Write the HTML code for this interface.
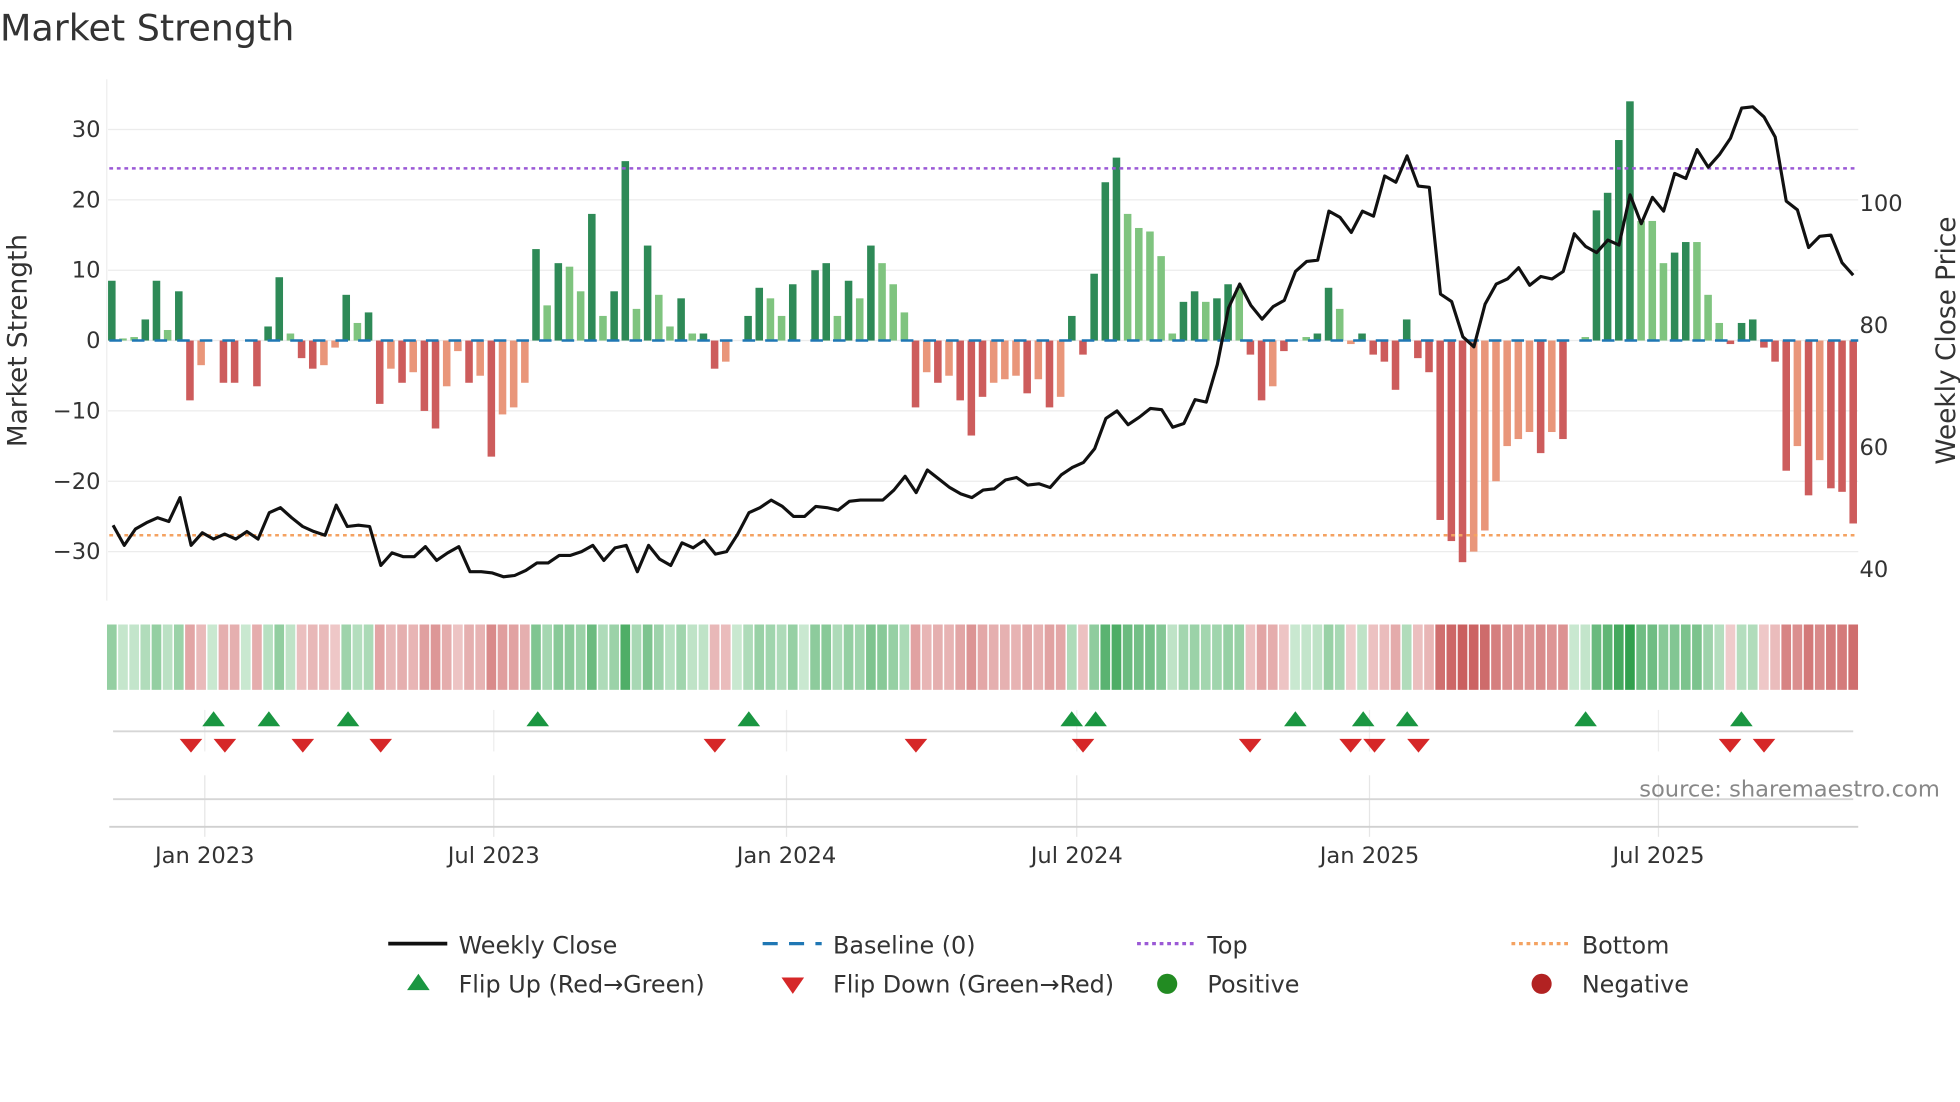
<!DOCTYPE html>
<html><head><meta charset="utf-8">
<style>
html,body{margin:0;padding:0;background:#fff;width:1960px;height:1102px;overflow:hidden}
svg{display:block}
text{font-family:"DejaVu Sans","Liberation Sans",sans-serif}
</style></head>
<body>
<svg id="s" width="1960" height="1102" viewBox="0 0 1560 877" xmlns="http://www.w3.org/2000/svg">
<rect width="1560" height="877" fill="#fff"/>
<text x="0" y="32" font-size="29" fill="#333">Market Strength</text>
<g id="grid"></g>
<g id="bars"></g>
<g id="strip"></g>
<g id="marks"></g>
<g id="lines"></g>
<g font-size="18" fill="#333">
<text x="80" y="109" text-anchor="end">30</text>
<text x="80" y="165" text-anchor="end">20</text>
<text x="80" y="221" text-anchor="end">10</text>
<text x="80" y="277" text-anchor="end">0</text>
<text x="80" y="333" text-anchor="end">−10</text>
<text x="80" y="389" text-anchor="end">−20</text>
<text x="80" y="445" text-anchor="end">−30</text>
<text x="1480" y="168">100</text>
<text x="1480" y="265">80</text>
<text x="1480" y="362">60</text>
<text x="1480" y="459">40</text>
<text transform="translate(21,271) rotate(-90)" text-anchor="middle" font-size="21">Market Strength</text>
<text transform="translate(1556,271) rotate(-90)" text-anchor="middle" font-size="21">Weekly Close Price</text>
<text x="163" y="687" text-anchor="middle">Jan 2023</text>
<text x="393" y="687" text-anchor="middle">Jul 2023</text>
<text x="626" y="687" text-anchor="middle">Jan 2024</text>
<text x="857" y="687" text-anchor="middle">Jul 2024</text>
<text x="1090" y="687" text-anchor="middle">Jan 2025</text>
<text x="1320" y="687" text-anchor="middle">Jul 2025</text>
<text x="1544" y="634" text-anchor="end" fill="#888">source: sharemaestro.com</text>
</g>
<g font-size="19" fill="#333">
<line x1="309" y1="751" x2="356" y2="751" stroke="#111" stroke-width="3"/>
<text x="365" y="759">Weekly Close</text>
<line x1="607" y1="751" x2="654" y2="751" stroke="#1f77b4" stroke-width="2.5" stroke-dasharray="12,9"/>
<text x="663" y="759">Baseline (0)</text>
<line x1="905" y1="751" x2="952" y2="751" stroke="#9b59d6" stroke-width="2.5" stroke-dasharray="3,3"/>
<text x="961" y="759">Top</text>
<line x1="1203" y1="751" x2="1250" y2="751" stroke="#f4a261" stroke-width="2.5" stroke-dasharray="3,3"/>
<text x="1259" y="759">Bottom</text>
<polygon points="324,788 342,788 333,775" fill="#1a9641"/>
<text x="365" y="790">Flip Up (Red→Green)</text>
<polygon points="622,778 640,778 631,791" fill="#d62728"/>
<text x="663" y="790">Flip Down (Green→Red)</text>
<circle cx="929" cy="783" r="8" fill="#228b22"/>
<text x="961" y="790">Positive</text>
<circle cx="1227" cy="783" r="8" fill="#b22222"/>
<text x="1259" y="790">Negative</text>
</g>
</svg>
<script>
var NS="http://www.w3.org/2000/svg";
function el(p,t,a){var e=document.createElementNS(NS,t);for(var k in a)e.setAttribute(k,a[k]);document.getElementById(p).appendChild(e);return e;}
var B=[[8.5,1],[0.3,0],[0.5,0],[3,1],[8.5,1],[1.5,0],[7,1],[-8.5,1],[-3.5,0],[0,0],[-6,1],[-6,1],[0,0],[-6.5,1],[2,1],[9,1],[1,0],[-2.5,1],[-4,1],[-3.5,0],[-1,0],[6.5,1],[2.5,0],[4,1],[-9,1],[-4,0],[-6,1],[-4.5,0],[-10,1],[-12.5,1],[-6.5,0],[-1.5,0],[-6,1],[-5,0],[-16.5,1],[-10.5,0],[-9.5,0],[-6,0],[13,1],[5,0],[11,1],[10.5,0],[7,0],[18,1],[3.5,0],[7,1],[25.5,1],[4.5,0],[13.5,1],[6.5,0],[2,0],[6,1],[1,0],[1,1],[-4,1],[-3,0],[0,0],[3.5,1],[7.5,1],[6,0],[3.5,0],[8,1],[0,0],[10,1],[11,1],[3.5,0],[8.5,1],[6,0],[13.5,1],[11,0],[8,0],[4,0],[-9.5,1],[-4.5,0],[-6,1],[-5,0],[-8.5,1],[-13.5,1],[-8,1],[-6,0],[-5.5,0],[-5,0],[-7.5,1],[-5.5,0],[-9.5,1],[-8,0],[3.5,1],[-2,1],[9.5,1],[22.5,1],[26,1],[18,0],[16,0],[15.5,0],[12,0],[1,0],[5.5,1],[7,1],[5.5,0],[6,1],[8,1],[7.5,0],[-2,1],[-8.5,1],[-6.5,0],[-1.5,1],[0,0],[0.5,0],[1,1],[7.5,1],[4.5,0],[-0.5,0],[1,1],[-2,1],[-3,1],[-7,1],[3,1],[-2.5,1],[-4.5,1],[-25.5,1],[-28.5,1],[-31.5,1],[-30,0],[-27,0],[-20,0],[-15,0],[-14,0],[-13,0],[-16,1],[-13,0],[-14,1],[0,0],[0.5,0],[18.5,1],[21,1],[28.5,1],[34,1],[17,0],[17,0],[11,0],[12.5,1],[14,1],[14,0],[6.5,0],[2.5,0],[-0.5,1],[2.5,1],[3,1],[-1,1],[-3,1],[-18.5,1],[-15,0],[-22,1],[-17,0],[-21,1],[-21.5,1],[-26,1]];
var n=B.length,x0=89,dx=(1475-89)/(n-1);
function Y(v){return 271-5.6*v;}
[30,20,10,0,-10,-20,-30].forEach(function(v){el("grid","line",{x1:86,x2:1479,y1:Y(v),y2:Y(v),stroke:"#ececec","stroke-width":1});});
el("grid","line",{x1:85,x2:85,y1:63,y2:478,stroke:"#eee"});
[163,393,626,857,1090,1320].forEach(function(x){el("grid","line",{x1:x,x2:x,y1:565,y2:598,stroke:"#eee"});el("grid","line",{x1:x,x2:x,y1:617,y2:666,stroke:"#e6e6e6"});});
el("grid","line",{x1:90,x2:1475,y1:582,y2:582,stroke:"#d6d6d6","stroke-width":1.5});
el("grid","line",{x1:90,x2:1475,y1:636,y2:636,stroke:"#d6d6d6","stroke-width":1.5});
el("grid","line",{x1:87,x2:1479,y1:658,y2:658,stroke:"#d0d0d0","stroke-width":1.5});
function mix(a,b,t){return "rgb("+a.map(function(c,i){return Math.round(c+(b[i]-c)*t);}).join(",")+")";}
for(var i=0;i<n;i++){var v=B[i][0],d=B[i][1],x=x0+i*dx;
 var col=v>=0?(d?"#2e8a57":"#7fc47f"):(d?"#cd5c5c":"#e9967a");
 if(Math.abs(v)>0.05){var y1=Math.min(Y(v),271),h=Math.abs(Y(v)-271);el("bars","rect",{x:x-3,y:y1,width:6,height:h,fill:col});}
 var t=Math.min(Math.abs(v)/34,1);t=0.12+0.88*Math.pow(t,0.75);
 var c=v>=0?mix([222,242,226],[50,160,78],t):mix([246,224,224],[200,88,88],t);
 el("strip","rect",{x:x-dx/2+0.6,y:497,width:dx-1.2,height:52,fill:c});
}
el("lines","line",{x1:87,x2:1479,y1:134,y2:134,stroke:"#9b59d6","stroke-width":2,"stroke-dasharray":"3,3"});
el("lines","line",{x1:87,x2:1479,y1:426,y2:426,stroke:"#f4a261","stroke-width":2,"stroke-dasharray":"3,3"});
el("lines","line",{x1:87,x2:1479,y1:271,y2:271,stroke:"#1f77b4","stroke-width":2,"stroke-dasharray":"10,8"});
var P=[418,434,421,416,412,415,396,434,424,429,425,429,423,429,408,404,412,419,423,426,402,419,418,419,450,440,443,443,435,446,440,435,455,455,456,459,458,454,448,448,442,442,439,434,446,436,434,455,434,445,450,432,436,430,441,439,425,408,404,398,403,411,411,403,404,406,399,398,398,398,390,379,392,374,381,388,393,396,390,389,382,380,386,385,388,378,372,368,357,333,327,338,332,325,326,340,337,318,320,290,245,226,243,254,244,239,216,208,207,168,173,185,168,172,140,145,124,148,149,234,240,268,276,242,226,222,213,227,220,222,216,186,196,201,191,195,155,178,157,168,138,142,119,133,123,110,86,85,93,109,160,167,197,188,187,209,219];
var m=P.length,pdx=(1475-90)/(m-1),pts=P.map(function(y,i){return (90+i*pdx).toFixed(1)+","+y;}).join(" ");
el("lines","polyline",{points:pts,fill:"none",stroke:"#111","stroke-width":2.5,"stroke-linejoin":"round"});
[170,214,277,428,596,853,872,1031,1085,1120,1262,1386].forEach(function(x){el("marks","polygon",{points:(x-9)+",578 "+(x+9)+",578 "+x+",566",fill:"#1a9641"});});
[152,179,241,303,569,729,862,995,1075,1094,1129,1377,1404].forEach(function(x){el("marks","polygon",{points:(x-9)+",588 "+(x+9)+",588 "+x+",599",fill:"#d62728"});});
</script>
</body></html>
